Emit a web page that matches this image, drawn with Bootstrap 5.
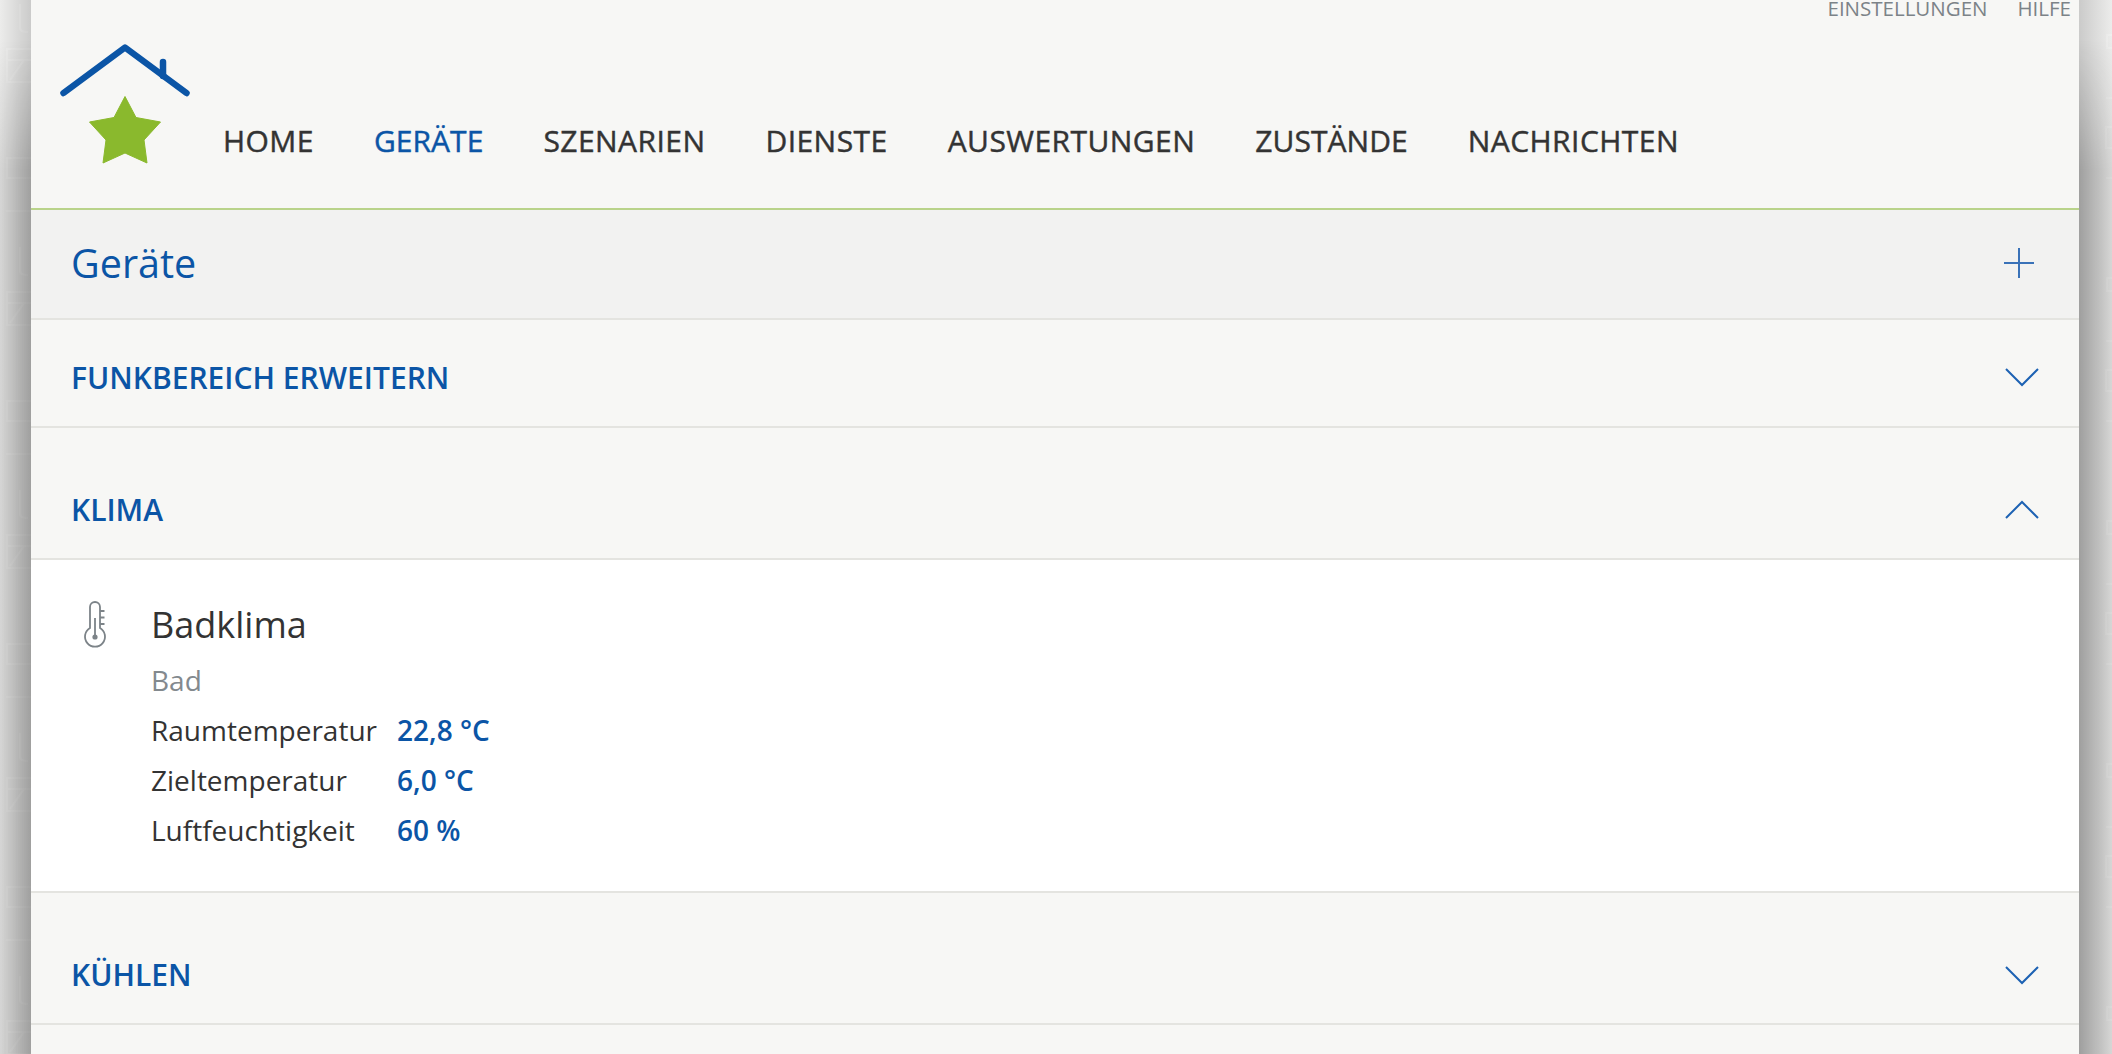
<!DOCTYPE html>
<html lang="de">
<head>
<meta charset="utf-8">
<title>Geräte</title>
<link href="https://cdn.jsdelivr.net/npm/bootstrap@5.3.0/dist/css/bootstrap.min.css" rel="stylesheet">
<style>
html,body{height:100%;overflow:hidden}
body{background:#ececeb;font-family:"Open Sans","Noto Sans",sans-serif;color:#333;position:relative}
.wallpaper{position:absolute;left:0;top:0;width:100%;height:100%}
.strip{position:absolute;top:0;bottom:0}
.strip-l{left:0;width:31px;background:linear-gradient(90deg,rgba(0,0,0,0),rgba(0,0,0,.14))}
.strip-r{right:0;width:33px;background:linear-gradient(270deg,rgba(0,0,0,0),rgba(0,0,0,.14))}
.strip-dark{-webkit-mask-image:linear-gradient(180deg,transparent 40px,#000 170px);mask-image:linear-gradient(180deg,transparent 40px,#000 170px)}
.strip-dark.strip-l{background:linear-gradient(90deg,rgba(0,0,0,.09),rgba(0,0,0,.21))}
.strip-dark.strip-r{background:linear-gradient(270deg,rgba(0,0,0,.09),rgba(0,0,0,.21))}
.sheet{position:relative;margin:0 33px 0 31px;height:1054px;background:#f7f7f5;overflow:hidden}
.topbar{height:210px;border-bottom:2px solid #b9d38a;position:relative}
.metalinks{position:absolute;top:-5px;right:8px;font-size:20.5px;line-height:26px;color:#7c8388;gap:30px}
.brand{position:absolute;left:29px;top:42px}
.mainnav{padding:121px 0 0 192px;gap:60px;font-size:30px;line-height:40px;letter-spacing:.45px;-webkit-text-stroke:.45px currentColor;color:#333}
.mainnav .on{color:#0b55a6}
.mainnav .snug{letter-spacing:.05px}
.titlebar{height:110px;background:#f2f2f1;border-bottom:2px solid #e4e4e0;padding:0 45px 0 40px;color:#0b55a6;font-size:39.5px}
.titlebar svg{margin-top:-2px}
.rowhead{border-bottom:2px solid #e4e4e0;padding:0 40px;color:#0b55a6;font-size:30px;font-weight:600}
.h-short{height:108px;padding-top:8px}
.h-tall{height:132px;padding-top:33px}
.detail{height:333px;background:#fff;border-bottom:2px solid #e4e4e0;padding:41px 0 0 40px}
.therm{margin:0 0 0 12px;width:68px;flex:none}
.devname{font-size:36px;line-height:48px;color:#333}
.devroom{font-size:28px;line-height:50px;color:#83898e;margin-top:6px}
.vals{display:grid;grid-template-columns:246px auto;font-size:28px;line-height:50px;color:#333}
.vals b{color:#0b55a6;font-weight:600}
</style>
</head>
<body>
<svg class="wallpaper" aria-hidden="true">
  <defs>
    <pattern id="tile" width="2112" height="243" patternUnits="userSpaceOnUse">
      <g fill="none" stroke="#fff" stroke-opacity=".22" stroke-width="2">
        <path d="M20 4V28Q20 32 28 32"/>
        <rect x="7" y="49" width="40" height="33"/>
        <path d="M10 80L24 60M8 60H34"/>
        <rect x="7" y="158" width="40" height="20"/>
        <path d="M6 211H40"/>
        <rect x="2107" y="35" width="20" height="13"/>
        <rect x="2106" y="127" width="20" height="21"/>
        <path d="M2106 98H2112"/>
        <path d="M2106 178H2112"/>
      </g>
    </pattern>
  </defs>
  <rect width="100%" height="100%" fill="url(#tile)"/>
</svg>
<div class="strip strip-l"></div>
<div class="strip strip-r"></div>
<div class="strip strip-l strip-dark"></div>
<div class="strip strip-r strip-dark"></div>
<div class="sheet">
  <header class="topbar">
    <div class="metalinks d-flex"><span>EINSTELLUNGEN</span><span>HILFE</span></div>
    <svg class="brand" width="132" height="126" viewBox="0 0 132 126">
      <path d="M3.5 51 L65 5.5 L126.5 51" fill="none" stroke="#0b55a6" stroke-width="6.5" stroke-linecap="round" stroke-linejoin="round"/>
      <path d="M103 20 V34" fill="none" stroke="#0b55a6" stroke-width="6.5" stroke-linecap="round"/>
      <path d="M65 54.5 L76 75.5 L100.5 80 L84 98 L87 121 L65 111 L43 121 L46 98 L29.5 80 L54 75.5 Z" fill="#8ab92d" stroke="#8ab92d" stroke-width="1" stroke-linejoin="round"/>
    </svg>
    <nav class="mainnav d-flex"><span>HOME</span><span class="on snug">GERÄTE</span><span>SZENARIEN</span><span>DIENSTE</span><span>AUSWERTUNGEN</span><span class="snug">ZUSTÄNDE</span><span>NACHRICHTEN</span></nav>
  </header>
  <div class="titlebar d-flex align-items-center justify-content-between">
    <span>Geräte</span>
    <svg width="30" height="30" viewBox="0 0 30 30"><path d="M15 0V30M0 15H30" stroke="#3a72b8" stroke-width="2" fill="none"/></svg>
  </div>
  <div class="rowhead h-short d-flex align-items-center justify-content-between">
    <span>FUNKBEREICH ERWEITERN</span>
    <svg width="34" height="20" viewBox="0 0 34 20"><path d="M1 2L17 18L33 2" stroke="#1d62b3" stroke-width="2" fill="none"/></svg>
  </div>
  <div class="rowhead h-tall d-flex align-items-center justify-content-between">
    <span>KLIMA</span>
    <svg width="34" height="20" viewBox="0 0 34 20"><path d="M1 18L17 2L33 18" stroke="#1d62b3" stroke-width="2" fill="none"/></svg>
  </div>
  <div class="detail d-flex">
    <svg class="therm" width="24" height="48" viewBox="0 0 24 48" preserveAspectRatio="xMinYMin meet">
      <g transform="translate(1 1)" fill="none" stroke="#7c8388" stroke-width="1.8">
        <path d="M6 26V5a5 5 0 0 1 10 0V26a10 10 0 1 1-10 0Z"/>
        <path d="M11 16V34"/>
        <path d="M16 9h4.5M16 15.5h4.5M16 22h4.5"/>
        <circle cx="11" cy="35" r="2.6" fill="#7c8388" stroke="none"/>
      </g>
    </svg>
    <div>
      <div class="devname">Badklima</div>
      <div class="devroom">Bad</div>
      <div class="vals">
        <span>Raumtemperatur</span><b>22,8 °C</b>
        <span>Zieltemperatur</span><b>6,0 °C</b>
        <span>Luftfeuchtigkeit</span><b>60 %</b>
      </div>
    </div>
  </div>
  <div class="rowhead h-tall d-flex align-items-center justify-content-between">
    <span>KÜHLEN</span>
    <svg width="34" height="20" viewBox="0 0 34 20"><path d="M1 2L17 18L33 2" stroke="#1d62b3" stroke-width="2" fill="none"/></svg>
  </div>
</div>
<script src="https://cdn.jsdelivr.net/npm/bootstrap@5.3.0/dist/js/bootstrap.bundle.min.js"></script>
</body>
</html>
